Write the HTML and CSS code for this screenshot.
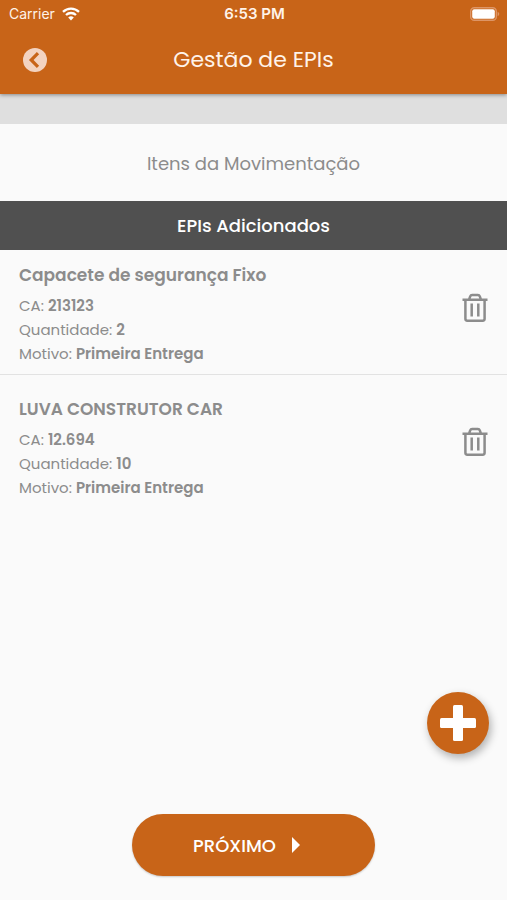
FILE: index.html
```html
<!DOCTYPE html>
<html lang="pt-BR">
<head>
<meta charset="utf-8">
<meta name="viewport" content="width=device-width, initial-scale=1">
<title>Gestão de EPIs</title>
<link rel="stylesheet" href="styles.css">
</head>
<body>
<div class="app">
  <header class="top">
    <div class="status">
      <div class="carrier">
        <span>Carrier</span>
        <svg class="wifi" viewBox="0 0 18 14" aria-hidden="true">
          <path d="M1 4.8a11.6 11.6 0 0 1 16 0M4 8a7.3 7.3 0 0 1 10 0" fill="none" stroke="currentColor" stroke-width="2.3"/>
          <path d="M9 13.4 6.200 10.600a4 4 0 0 1 5.600 0z" fill="currentColor"/>
        </svg>
      </div>
      <time class="clock">6:53 PM</time>
      <svg class="battery" viewBox="0 0 30 14" aria-hidden="true">
        <rect x="0.7" y="0.7" width="25.6" height="12.6" rx="3.6" fill="none" stroke="#dd9566" stroke-width="1.400"/>
        <rect x="2.2" y="2.2" width="22.6" height="9.6" rx="2" fill="#fff"/>
        <path d="M27.6 4.8c2.2 .8 2.2 3.6 0 4.4z" fill="#dd9566"/>
      </svg>
    </div>
    <div class="navbar">
      <button class="back" type="button" aria-label="Voltar">
        <svg viewBox="0 0 24 24" aria-hidden="true">
          <circle cx="12" cy="12" r="12" fill="#f3d3c0"/>
          <path d="M15 5.200 8.200 12l6.800 6.800" fill="none" stroke="#c86418" stroke-width="3.2"/>
        </svg>
      </button>
      <h1 class="title">Gestão de EPIs</h1>
    </div>
  </header>
  <div class="strip"></div>
  <main class="content">
    <h2 class="subtitle">Itens da Movimentação</h2>
    <h3 class="section">EPIs Adicionados</h3>
    <ul class="items">
      <li class="item">
        <div class="info">
          <h4 class="name">Capacete de segurança Fixo</h4>
          <p>CA: <b>213123</b></p>
          <p>Quantidade: <b>2</b></p>
          <p>Motivo: <b>Primeira Entrega</b></p>
        </div>
        <button class="trash" type="button" aria-label="Remover Capacete de segurança Fixo">
          <svg viewBox="0 0 26 30" aria-hidden="true">
            <path d="M.5 6.700h25M3.400 6.700v19.100q0 1.900 1.900 1.900h15.400q1.900 0 1.900-1.900V6.700M7.200 6.200 8.200 3.400q.5-1.400 1.900-1.400h5.800q1.400 0 1.900 1.400L18.800 6.200M9.700 10.500v13M16.300 10.500v13" fill="none" stroke="currentColor" stroke-width="2.5"/>
          </svg>
        </button>
      </li>
      <li class="item">
        <div class="info">
          <h4 class="name">LUVA CONSTRUTOR CAR</h4>
          <p>CA: <b>12.694</b></p>
          <p>Quantidade: <b>10</b></p>
          <p>Motivo: <b>Primeira Entrega</b></p>
        </div>
        <button class="trash" type="button" aria-label="Remover LUVA CONSTRUTOR CAR">
          <svg viewBox="0 0 26 30" aria-hidden="true">
            <path d="M.5 6.700h25M3.400 6.700v19.100q0 1.900 1.900 1.900h15.400q1.900 0 1.900-1.900V6.700M7.200 6.200 8.200 3.400q.5-1.400 1.900-1.400h5.800q1.400 0 1.900 1.400L18.800 6.200M9.700 10.500v13M16.300 10.500v13" fill="none" stroke="currentColor" stroke-width="2.5"/>
          </svg>
        </button>
      </li>
    </ul>
  </main>
  <footer class="footer">
    <button class="next" type="button">
      <span>PRÓXIMO</span>
      <svg viewBox="0 0 8 16" aria-hidden="true"><path d="M0 0 8 8 0 16z" fill="currentColor"/></svg>
    </button>
  </footer>
  <button class="add" type="button" aria-label="Adicionar">
    <svg viewBox="0 0 36 36" aria-hidden="true">
      <rect x="13" y="0" width="10" height="36" rx="1.500" fill="currentColor"/>
      <rect x="0" y="13" width="36" height="10" rx="1.500" fill="currentColor"/>
    </svg>
  </button>
</div>
</body>
</html>
```
FILE: styles.css
```css
* {
  box-sizing: border-box;
}

body,
h1,
h2,
h3,
h4,
p,
ul {
  margin: 0;
  padding: 0;
}

body {
  background: #fafafa;
  color: #8c8c8c;
  font-family: Poppins, Inter, "Open Sans", sans-serif;
}

button {
  border: 0;
  padding: 0;
  background: none;
  color: inherit;
  font: inherit;
  cursor: pointer;
}

svg {
  display: block;
}

.app {
  position: relative;
  display: flex;
  flex-direction: column;
  min-height: 100vh;
}

.top {
  position: relative;
  background: #c86418;
  color: #fff3e9;
  box-shadow: 0 1px 4px rgba(0, 0, 0, 0.4);
}

.status {
  display: grid;
  grid-template-columns: 1fr auto 1fr;
  align-items: center;
  height: 27px;
  padding: 0 7px 0 9px;
  font-family: Inter, sans-serif;
  font-size: 14px;
}

.carrier {
  display: flex;
  align-items: center;
  gap: 7px;
}

.wifi {
  width: 18px;
  height: 14px;
  color: #fff;
}

.clock {
  font-size: 15px;
  font-weight: 600;
}

.battery {
  justify-self: end;
  width: 30px;
  height: 14px;
}

.navbar {
  display: grid;
  grid-template-columns: 24px 1fr 24px;
  align-items: center;
  height: 67px;
  padding: 0 23px 2px;
}

.back svg {
  width: 24px;
  height: 24px;
}

.title {
  font-size: 22px;
  font-weight: 400;
  text-align: center;
}

.strip {
  height: 30px;
  background: #dfdfdf;
}

.subtitle {
  padding: 25px 16px 23px;
  font-size: 18px;
  line-height: 29px;
  font-weight: 400;
  text-align: center;
}

.section {
  padding: 10px 16px;
  background: #505050;
  color: #fff;
  font-size: 18px;
  line-height: 29px;
  font-weight: 500;
  text-align: center;
}

.items {
  list-style: none;
}

.item {
  display: flex;
  align-items: center;
  justify-content: space-between;
  padding: 9px 19px 8px;
}

.item + .item {
  padding-top: 18px;
  border-top: 1px solid #e2e2e2;
}

.info {
  font-size: 15px;
  line-height: 24px;
  font-weight: 400;
}

.info b {
  font-weight: 600;
}

.name {
  margin-bottom: 3px;
  font-size: 17px;
  line-height: 32px;
  font-weight: 600;
}

.trash {
  padding-bottom: 10px;
}

.trash svg {
  width: 26px;
  height: 30px;
}

.footer {
  display: flex;
  justify-content: center;
  margin-top: auto;
  padding: 24px;
}

.next {
  display: flex;
  align-items: center;
  justify-content: center;
  gap: 16px;
  width: 53%;
  height: 62px;
  padding-right: 14px;
  border-radius: 31px;
  background: #c86418;
  color: #fff;
  font-size: 18px;
  font-weight: 500;
  box-shadow: 0 1px 2px rgba(0, 0, 0, 0.2);
}

.next svg {
  width: 8px;
  height: 16px;
}

.add {
  position: fixed;
  right: 18px;
  bottom: 146px;
  display: grid;
  place-items: center;
  width: 62px;
  height: 62px;
  border-radius: 50%;
  background: #c86418;
  color: #fff;
  box-shadow: 2px 4px 8px rgba(0, 0, 0, 0.3);
}

.add svg {
  width: 36px;
  height: 36px;
}
```
